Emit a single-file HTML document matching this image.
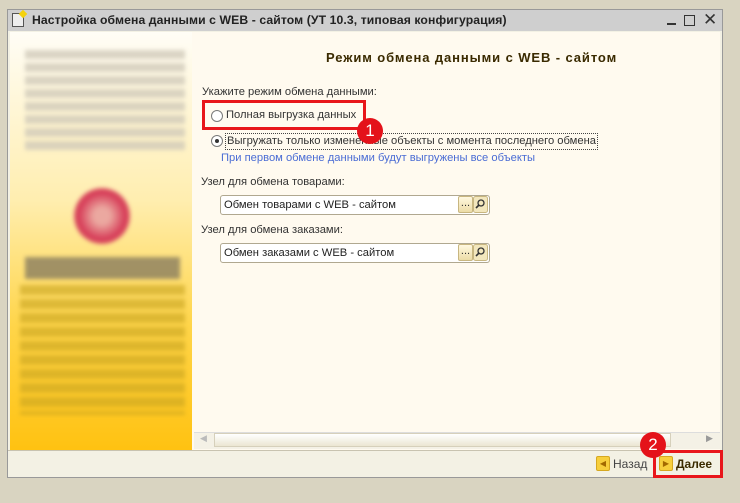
<!DOCTYPE html><html><head><meta charset="utf-8"><style>
body{margin:0;width:740px;height:503px;background:#d9d4c1;position:relative;overflow:hidden;font-family:"Liberation Sans",sans-serif;font-size:11.2px;color:#333}
.a{position:absolute}
.win{left:7px;top:9px;width:716px;height:469px;background:#f3f1e4;border:1px solid #999;box-sizing:border-box}
.title{left:8px;top:10px;width:714px;height:21px;background:#cfcfcf}
.left{left:10px;top:32px;width:182px;height:418px;background:linear-gradient(#fffdf6 0%,#ffeeb0 40%,#ffd54a 70%,#ffc211 100%)}
.right{left:192px;top:32px;width:528px;height:418px;background:#fffaef}
.blk{filter:blur(2px)}
.field{height:20px;border:1px solid #b0a890;border-radius:3px;background:#fff;box-sizing:border-box;line-height:18px;padding-left:3px;color:#222}
.btn{width:15px;height:17px;background:linear-gradient(#fff8e0,#ecdca6);border:1px solid #c8b680;border-radius:2px;box-sizing:border-box;font-size:11px;line-height:12px;text-align:center}
.red{border:3px solid #e8161b;box-sizing:border-box}
.circ{width:26px;height:26px;border-radius:50%;background:#e4121a;color:#fff;font-size:17px;text-align:center;line-height:26px}
.radio{width:12px;height:12px;border-radius:50%;border:1px solid #7a7a7a;background:#fff;box-sizing:border-box}
</style></head><body>
<div class="a win"></div>
<div class="a title"></div>
<div class="a" style="left:12px;top:13px;width:12px;height:14px;border:1px solid #555;box-sizing:border-box;background:#eee"></div>
<div class="a" style="left:20px;top:11px;width:6px;height:6px;background:#f5d20c;transform:rotate(45deg)"></div>
<div class="a" style="left:32px;top:13px;font-weight:bold;font-size:12.2px;letter-spacing:.1px;color:#222">Настройка обмена данными с WEB - сайтом (УТ 10.3, типовая конфигурация)</div>
<div class="a" style="left:667px;top:23px;width:9px;height:2px;background:#333"></div>
<div class="a" style="left:684px;top:15px;width:11px;height:11px;border:1.5px solid #333;box-sizing:border-box"></div>
<div class="a" style="left:703px;top:10px;font-size:17px;color:#333">✕</div>
<div class="a left"></div>
<div class="a blk" style="left:25px;top:50px;width:160px;height:100px;background:repeating-linear-gradient(#cfc8b8 0 9px,transparent 9px 13px);opacity:.75"></div>
<div class="a blk" style="left:74px;top:188px;width:56px;height:56px;border-radius:50%;background:radial-gradient(#eba8a0 20%,#d63a56 60%,#f0c8a0 100%)"></div>
<div class="a blk" style="left:25px;top:257px;width:155px;height:22px;background:#8a7e60;opacity:.8"></div>
<div class="a blk" style="left:20px;top:285px;width:165px;height:130px;background:repeating-linear-gradient(#c8a420 0 10px,transparent 10px 14px);opacity:.6"></div>
<div class="a right"></div>
<div class="a" style="left:326px;top:50px;font-weight:bold;font-size:13px;letter-spacing:.9px;color:#3a2a00">Режим обмена данными с WEB - сайтом</div>
<div class="a" style="left:202px;top:86px">Укажите режим обмена данными:</div>
<div class="a radio" style="left:211px;top:110px"></div>
<div class="a" style="left:226px;top:109px">Полная выгрузка данных</div>
<div class="a red" style="left:202px;top:100px;width:164px;height:30px"></div>
<div class="a radio" style="left:211px;top:135px"></div>
<div class="a" style="left:215px;top:139px;width:4px;height:4px;border-radius:50%;background:#333"></div>
<div class="a" style="left:225px;top:133px;border:1px dotted #444;padding:0 1px;height:15px;line-height:14px">Выгружать только измененные объекты с момента последнего обмена</div>
<div class="a circ" style="left:357px;top:118px">1</div>
<div class="a" style="left:221px;top:152px;color:#4a6cd4">При первом обмене данными будут выгружены все объекты</div>
<div class="a" style="left:201px;top:176px">Узел для обмена товарами:</div>
<div class="a field" style="left:220px;top:195px;width:270px">Обмен товарами с WEB - сайтом</div>
<div class="a btn" style="left:458px;top:196px">...</div>
<svg class="a" style="left:473px;top:196px" width="15" height="17"><rect x=".5" y=".5" width="14" height="16" rx="2" fill="#f3e7bd" stroke="#c8b680"/><circle cx="8" cy="7" r="3" fill="none" stroke="#333" stroke-width="1.3"/><path d="M6 9 L3 12" stroke="#333" stroke-width="1.6"/></svg>
<div class="a" style="left:201px;top:224px">Узел для обмена заказами:</div>
<div class="a field" style="left:220px;top:243px;width:270px">Обмен заказами с WEB - сайтом</div>
<div class="a btn" style="left:458px;top:244px">...</div>
<svg class="a" style="left:473px;top:244px" width="15" height="17"><rect x=".5" y=".5" width="14" height="16" rx="2" fill="#f3e7bd" stroke="#c8b680"/><circle cx="8" cy="7" r="3" fill="none" stroke="#333" stroke-width="1.3"/><path d="M6 9 L3 12" stroke="#333" stroke-width="1.6"/></svg>
<div class="a" style="left:194px;top:432px;width:526px;height:16px;background:#f4f1e6;border-top:1px solid #ddd"></div>
<div class="a" style="left:214px;top:433px;width:457px;height:14px;background:linear-gradient(#fff,#ebe6d2);border:1px solid #d6d0bb;box-sizing:border-box"></div>
<div class="a" style="left:200px;top:433px;color:#bbb;font-size:9px">◀</div>
<div class="a" style="left:706px;top:433px;color:#999;font-size:9px">▶</div>
<div class="a" style="left:8px;top:450px;width:714px;height:1px;background:#c8c3b0"></div>
<div class="a" style="left:596px;top:456px;width:14px;height:15px;background:#f7cf3c;border:1px solid #d6a820;border-radius:2px;box-sizing:border-box;font-size:8px;color:#a36a00;line-height:13px;text-align:center">◀</div>
<div class="a" style="left:613px;top:457px;color:#444;font-size:12px">Назад</div>
<div class="a" style="left:659px;top:456px;width:14px;height:15px;background:#f7cf3c;border:1px solid #d6a820;border-radius:2px;box-sizing:border-box;font-size:8px;color:#a36a00;line-height:13px;text-align:center">▶</div>
<div class="a" style="left:676px;top:457px;font-weight:bold;color:#3a2a00;font-size:12px">Далее</div>
<div class="a red" style="left:653px;top:450px;width:70px;height:28px"></div>
<div class="a circ" style="left:640px;top:432px">2</div>
</body></html>
